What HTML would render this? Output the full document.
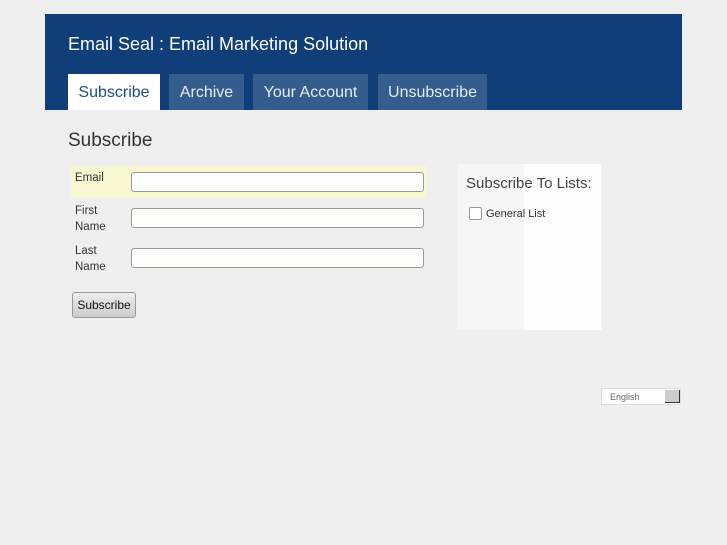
<!DOCTYPE html>
<html><head><style>
body{margin:0;background:#efefef;font-family:"Liberation Sans",sans-serif;width:727px;height:545px;position:relative;overflow:hidden}
.hdr{position:absolute;left:45px;top:14px;width:637px;height:96px;background:#0f3e78}
.title{position:absolute;left:23px;top:20px;color:#fff;font-size:18px}
.tab{position:absolute;top:60px;height:36px;background:#345d8d;color:#e6ecf4;font-size:16px;line-height:38px;text-align:center}
.tab.on{background:#fff;color:#1f4c86}
h1{position:absolute;left:68px;top:130px;margin:0;font-weight:normal;font-size:19px;color:#333}
.lbl{position:absolute;left:75px;font-size:11.5px;color:#333;line-height:16px}
.inp{position:absolute;left:131px;width:291px;height:18px;border:1px solid #999;border-radius:3px;background:#fdfdfc}
.side{position:absolute;left:457px;top:164px;width:144px;height:166px;background:#fdfdfd}
</style></head><body>
<div class="hdr">
<div class="title">Email Seal : Email Marketing Solution</div>
<div class="tab on" style="left:23px;width:92px">Subscribe</div>
<div class="tab" style="left:124px;width:75px">Archive</div>
<div class="tab" style="left:208px;width:115px">Your Account</div>
<div class="tab" style="left:333px;width:109px">Unsubscribe</div>
</div>
<h1>Subscribe</h1>
<div style="position:absolute;left:71px;top:166px;width:356px;height:32px;background:#f7f7d2"></div>
<div class="lbl" style="top:170px">Email</div>
<div class="inp" style="top:172px"></div>
<div class="lbl" style="top:203px">First<br>Name</div>
<div class="inp" style="top:208px"></div>
<div class="lbl" style="top:243px">Last<br>Name</div>
<div class="inp" style="top:248px"></div>
<div style="position:absolute;left:72px;top:292px;width:62px;height:24px;border:1px solid #999;border-radius:3px;background:linear-gradient(#eee,#ccc);font-size:12px;line-height:24px;text-align:center;color:#111">Subscribe</div>
<div class="side">
<div style="position:absolute;left:0;top:0;width:67px;height:166px;background:#f6f6f6"></div>
<div style="position:absolute;left:9px;top:11px;font-size:15px;color:#444">Subscribe To Lists:</div>
<div style="position:absolute;left:12px;top:43px;width:11px;height:11px;border:1px solid #999;border-radius:2px;background:#fff"></div>
<div style="position:absolute;left:29px;top:44px;font-size:11px;color:#333">General List</div>
</div>
<div style="position:absolute;left:601px;top:388px;width:78px;height:15px;border:1px solid #ddd;background:#fff;font-size:9px;color:#666;line-height:16px;text-indent:8px">English
<div style="position:absolute;right:0;top:1px;width:14px;height:12px;background:#ccc;border-right:1px solid #333;border-bottom:1px solid #333"></div></div>
</body></html>
